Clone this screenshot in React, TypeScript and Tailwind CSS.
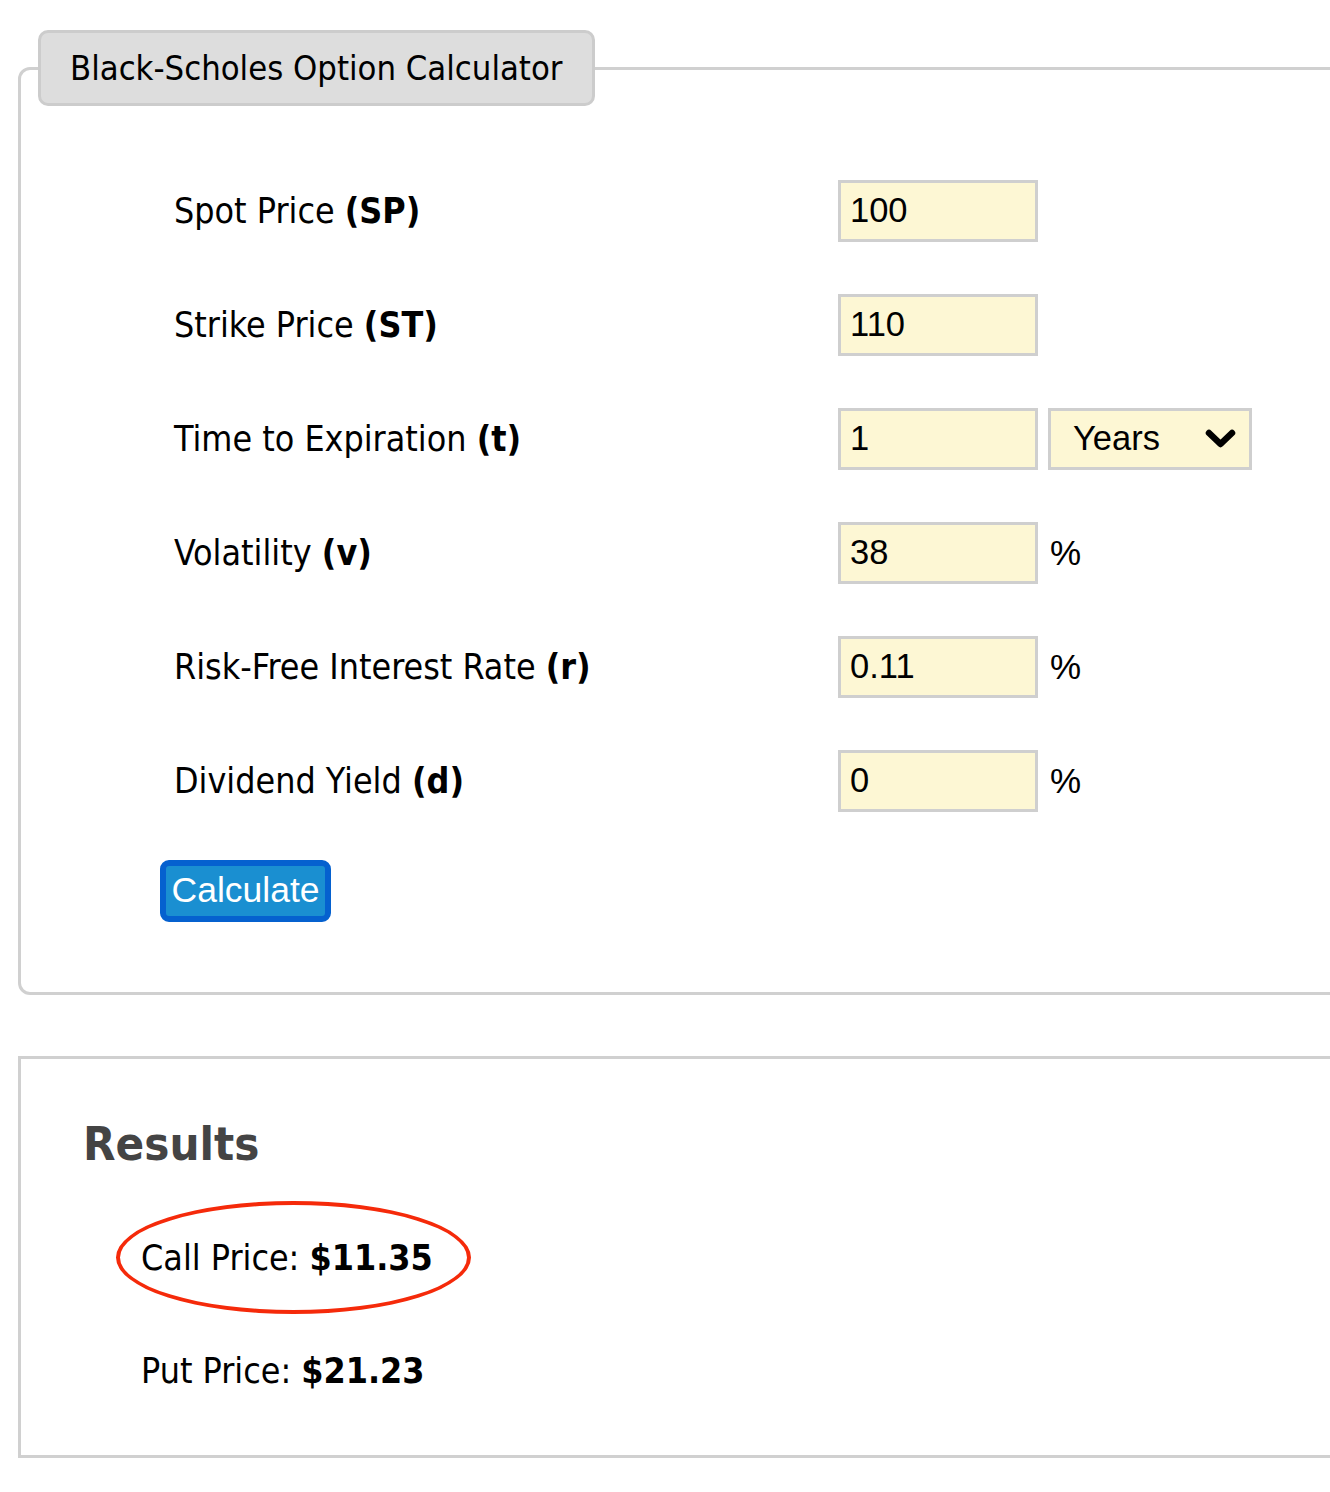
import React from "react";

const Row = ({
  label,
  sym,
  value,
  suffix,
}: {
  label: string;
  sym: string;
  value: string;
  suffix?: React.ReactNode;
}) => (
  <div className="flex items-center h-[62px]">
    <div className="w-[664px] text-[35.5px] text-black leading-none">
      {label} <b className="font-bold">({sym})</b>
    </div>
    <div className="w-[200px] h-[62px] border-[3px] border-[#cfcfcf] bg-[#fdf7d4] flex items-center pl-[9px] font-['Liberation_Sans',Arial,sans-serif] text-[34.5px] text-black">
      {value}
    </div>
    {suffix}
  </div>
);

const Pct = () => (
  <div className="ml-[12px] font-['Liberation_Sans',Arial,sans-serif] text-[35px] text-black">%</div>
);

export default function App() {
  return (
    <div className="w-[1330px] min-h-[1492px] overflow-hidden bg-white pt-[30px] font-['DejaVu_Sans_Condensed','DejaVu_Sans',sans-serif]">
      <fieldset className="ml-[18px] w-[1340px] border-[3px] border-[#d0d0d0] rounded-[12px] p-0 pb-[70px]">
        <legend className="ml-[17px] px-[29px] h-[76px] flex items-center border-[3px] border-[#cccccc] bg-[#dddddd] rounded-[10px] text-[34.3px] text-black leading-none">
          Black-Scholes Option Calculator
        </legend>
        <div className="ml-[153px] mt-[74px] flex flex-col gap-[52px]">
          <Row label="Spot Price" sym="SP" value="100" />
          <Row label="Strike Price" sym="ST" value="110" />
          <Row
            label="Time to Expiration"
            sym="t"
            value="1"
            suffix={
              <div className="ml-[10px] w-[204px] h-[62px] border-[3px] border-[#cfcfcf] bg-[#fdf7d4] flex items-center justify-between pl-[22px] pr-[13px] font-['Liberation_Sans',Arial,sans-serif] text-[34.5px] text-black">
                <span>Years</span>
                <svg width="31" height="22" viewBox="0 0 31 22">
                  <polyline points="4,5 15.5,16 27,5" fill="none" stroke="black" strokeWidth="6.5" strokeLinecap="round" strokeLinejoin="round" />
                </svg>
              </div>
            }
          />
          <Row label="Volatility" sym="v" value="38" suffix={<Pct />} />
          <Row label="Risk-Free Interest Rate" sym="r" value="0.11" suffix={<Pct />} />
          <Row label="Dividend Yield" sym="d" value="0" suffix={<Pct />} />
        </div>
        <div className="ml-[139px] mt-[48px]">
          <button className="w-[171px] h-[62px] rounded-[9px] border-[6px] border-[#0561cf] bg-[#1a8fd1] text-white font-['Liberation_Sans',Arial,sans-serif] text-[35.5px] leading-none flex items-center justify-center">
            Calculate
          </button>
        </div>
      </fieldset>

      <div className="ml-[18px] mt-[61px] w-[1340px] h-[402px] border-[3px] border-[#d0d0d0] pl-[62px] pt-[61px]">
        <h2 className="text-[47px] font-bold text-[#444444] leading-none">Results</h2>
        <div className="mt-[73px] ml-[58px] relative inline-block">
          <div className="absolute left-[-25px] top-[-39px] w-[355px] h-[113px] rounded-[50%] border-[4px] border-[#f52a0a]" />
          <p className="relative text-[35.5px] text-black leading-none">
            Call Price: <b>$11.35</b>
          </p>
        </div>
        <p className="mt-[76px] ml-[58px] text-[35.5px] text-black leading-none">
          Put Price: <b>$21.23</b>
        </p>
      </div>
    </div>
  );
}
